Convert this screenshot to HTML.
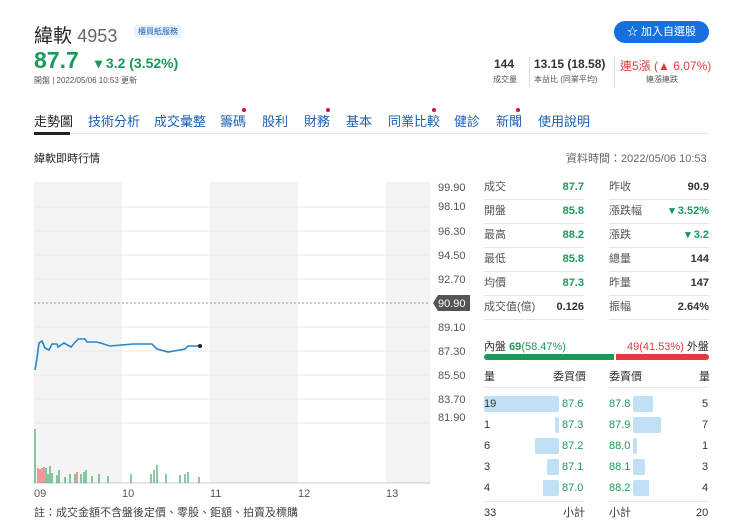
<!DOCTYPE html>
<html><head><meta charset="utf-8"><style>
*{margin:0;padding:0;box-sizing:border-box}
body{width:729px;height:531px;background:#fff;font-family:"Liberation Sans","Noto Sans CJK TC",sans-serif;color:#333;position:relative;overflow:hidden}
.a{position:absolute;white-space:nowrap}
.g{color:#1a9a5a}.r{color:#e03c3c}
.nav span{position:absolute;top:111px;font-size:13px;color:#1a5fb4}
.dot{position:absolute;width:4px;height:4px;border-radius:2px;background:#c0182e}
.rl{position:absolute;font-size:11px;color:#555;line-height:14px}
.rv{position:absolute;font-size:11px;font-weight:bold;text-align:right;width:60px;line-height:14px}
.hl{position:absolute;height:1px;background:#e6e6e6;width:100px}
.bb{position:absolute;height:16px;background:#bfe0f5;border-radius:2px}
.ov{position:absolute;font-size:11px;line-height:16px}
</style></head><body>
<div class="a" style="left:34px;top:21px;font-size:19px;color:#222">緯軟 <span style="color:#666;font-size:18px">4953</span></div>
<div class="a" style="left:134px;top:25px;font-size:8px;color:#1a5fb4;background:#eaf3fb;padding:1px 4px;border-radius:3px">櫃買紙服務</div>
<div class="a g" style="left:34px;top:47px;font-size:23px;font-weight:bold">87.7</div>
<div class="a g" style="left:95px;top:55px;font-size:14px;font-weight:bold">▾ 3.2 (3.52%)</div>
<div class="a" style="left:34px;top:75px;font-size:8px;color:#555">開盤 | 2022/05/06 10:53 更新</div>
<div class="a" style="left:614px;top:21px;width:95px;height:22px;background:#1670e0;border-radius:11px;color:#fff;font-size:11px;line-height:22px;text-align:center">☆ 加入自選股</div>
<div class="a" style="left:494px;top:57px;font-size:12px;font-weight:bold">144</div>
<div class="a" style="left:493px;top:74px;font-size:8px;color:#555">成交量</div>
<div class="a" style="left:529px;top:57px;width:1px;height:30px;background:#ddd"></div>
<div class="a" style="left:534px;top:57px;font-size:12px;font-weight:bold">13.15 (18.58)</div>
<div class="a" style="left:534px;top:74px;font-size:8px;color:#555">本益比 (同業平均)</div>
<div class="a" style="left:614px;top:57px;width:1px;height:30px;background:#ddd"></div>
<div class="a r" style="left:620px;top:57px;font-size:12px">連5漲 (▲ 6.07%)</div>
<div class="a" style="left:646px;top:74px;font-size:8px;color:#555">連漲連跌</div>
<div class="nav">
<span style="left:34px;color:#222">走勢圖</span><span style="left:88px">技術分析</span><span style="left:154px">成交彙整</span><span style="left:220px">籌碼</span><span style="left:262px">股利</span><span style="left:304px">財務</span><span style="left:346px">基本</span><span style="left:388px">同業比較</span><span style="left:454px">健診</span><span style="left:496px">新聞</span><span style="left:538px">使用說明</span>
</div>
<div class="dot" style="left:242px;top:108px"></div><div class="dot" style="left:326px;top:108px"></div><div class="dot" style="left:432px;top:108px"></div><div class="dot" style="left:516px;top:108px"></div>
<div class="a" style="left:34px;top:133px;width:675px;height:1px;background:#e6e6e6"></div>
<div class="a" style="left:34px;top:132px;width:36px;height:3px;background:#222"></div>
<div class="a" style="left:34px;top:150px;font-size:11px;color:#222">緯軟即時行情</div>
<div class="a" style="left:566px;top:150px;font-size:11px;color:#666">資料時間：2022/05/06 10:53</div>

<svg class="a" style="left:0;top:0" width="470" height="531">
<rect x="34" y="182" width="88" height="301" fill="#f4f4f4"/><rect x="210" y="182" width="88" height="301" fill="#f4f4f4"/><rect x="386" y="182" width="44" height="301" fill="#f4f4f4"/>
<g stroke="#e8e8e8" stroke-width="1"><line x1="34" x2="430" y1="207" y2="207"/><line x1="34" x2="430" y1="231" y2="231"/><line x1="34" x2="430" y1="255" y2="255"/><line x1="34" x2="430" y1="279" y2="279"/><line x1="34" x2="430" y1="327" y2="327"/><line x1="34" x2="430" y1="351" y2="351"/><line x1="34" x2="430" y1="375" y2="375"/><line x1="34" x2="430" y1="399" y2="399"/><line x1="34" x2="430" y1="423" y2="423"/></g>
<line x1="34" x2="430" y1="483" y2="483" stroke="#ccc"/>
<line x1="34" x2="430" y1="303" y2="303" stroke="#999" stroke-dasharray="2,2"/>
<polyline fill="none" stroke="#2a86c8" stroke-width="1.6" points="35,370 37,358 39,343 42,341 45,348 49,350 52,344 57,344 58,347 64,343 71,347 78,339 85,339 87,342 97,342 110,346 133,344 152,344 157,349 168,352 185,349 188,346 200,346"/>
<circle cx="200" cy="346" r="2" fill="#222"/>
<g stroke-width="1.2">
<line x1="35" y1="483" x2="35" y2="429" stroke="#3aa66a"/>
<g stroke="#e06060"><line x1="38" y1="483" x2="38" y2="468"/><line x1="40" y1="483" x2="40" y2="469"/><line x1="42" y1="483" x2="42" y2="468"/><line x1="44" y1="483" x2="44" y2="467"/><line x1="77" y1="483" x2="77" y2="472"/></g>
<g stroke="#3aa66a"><line x1="46" y1="483" x2="46" y2="468"/><line x1="48" y1="483" x2="48" y2="474"/><line x1="50" y1="483" x2="50" y2="466"/><line x1="52" y1="483" x2="52" y2="473"/><line x1="57" y1="483" x2="57" y2="475"/><line x1="59" y1="483" x2="59" y2="470"/><line x1="65" y1="483" x2="65" y2="477"/><line x1="70" y1="483" x2="70" y2="474"/><line x1="75" y1="483" x2="75" y2="474"/><line x1="81" y1="483" x2="81" y2="474"/><line x1="84" y1="483" x2="84" y2="472"/><line x1="86" y1="483" x2="86" y2="470"/><line x1="92" y1="483" x2="92" y2="476"/><line x1="99" y1="483" x2="99" y2="474"/><line x1="108" y1="483" x2="108" y2="476"/><line x1="131" y1="483" x2="131" y2="474"/><line x1="151" y1="483" x2="151" y2="474"/><line x1="154" y1="483" x2="154" y2="470"/><line x1="157" y1="483" x2="157" y2="465"/><line x1="166" y1="483" x2="166" y2="474"/><line x1="180" y1="483" x2="180" y2="475"/><line x1="185" y1="483" x2="185" y2="474"/><line x1="188" y1="483" x2="188" y2="472"/><line x1="199" y1="483" x2="199" y2="477"/></g></g>
<g font-size="11" fill="#555" font-family="Liberation Sans,sans-serif">
<text x="438" y="191">99.90</text><text x="438" y="210">98.10</text><text x="438" y="235">96.30</text><text x="438" y="259">94.50</text><text x="438" y="283">92.70</text><text x="438" y="331">89.10</text><text x="438" y="355">87.30</text><text x="438" y="379">85.50</text><text x="438" y="403">83.70</text><text x="438" y="421">81.90</text>
<text x="34" y="497">09</text><text x="122" y="497">10</text><text x="210" y="497">11</text><text x="298" y="497">12</text><text x="386" y="497">13</text></g>
<path d="M433 303 L438 295 H470 V311 H438 Z" fill="#555"/>
<text x="438" y="307" font-size="11" fill="#fff" font-family="Liberation Sans,sans-serif">90.90</text>
</svg>
<div class="a" style="left:34px;top:504px;font-size:11px;color:#444">註：成交金額不含盤後定價、零股、鉅額、拍賣及標購</div>

<div class="rl" style="left:484px;top:180px">成交</div><div class="rv g" style="left:524px;top:180px">87.7</div>
<div class="rl" style="left:609px;top:180px">昨收</div><div class="rv" style="left:649px;top:180px">90.9</div>
<div class="rl" style="left:484px;top:204px">開盤</div><div class="rv g" style="left:524px;top:204px">85.8</div>
<div class="rl" style="left:609px;top:204px">漲跌幅</div><div class="rv g" style="left:649px;top:204px">▾ 3.52%</div>
<div class="rl" style="left:484px;top:228px">最高</div><div class="rv g" style="left:524px;top:228px">88.2</div>
<div class="rl" style="left:609px;top:228px">漲跌</div><div class="rv g" style="left:649px;top:228px">▾ 3.2</div>
<div class="rl" style="left:484px;top:252px">最低</div><div class="rv g" style="left:524px;top:252px">85.8</div>
<div class="rl" style="left:609px;top:252px">總量</div><div class="rv" style="left:649px;top:252px">144</div>
<div class="rl" style="left:484px;top:276px">均價</div><div class="rv g" style="left:524px;top:276px">87.3</div>
<div class="rl" style="left:609px;top:276px">昨量</div><div class="rv" style="left:649px;top:276px">147</div>
<div class="rl" style="left:484px;top:300px">成交值(億)</div><div class="rv" style="left:524px;top:300px">0.126</div>
<div class="rl" style="left:609px;top:300px">振幅</div><div class="rv" style="left:649px;top:300px">2.64%</div>
<div class="hl" style="left:484px;top:199px"></div><div class="hl" style="left:609px;top:199px"></div>
<div class="hl" style="left:484px;top:223px"></div><div class="hl" style="left:609px;top:223px"></div>
<div class="hl" style="left:484px;top:247px"></div><div class="hl" style="left:609px;top:247px"></div>
<div class="hl" style="left:484px;top:271px"></div><div class="hl" style="left:609px;top:271px"></div>
<div class="hl" style="left:484px;top:295px"></div><div class="hl" style="left:609px;top:295px"></div>
<div class="hl" style="left:484px;top:319px"></div><div class="hl" style="left:609px;top:319px"></div>
<div class="a" style="left:484px;top:338px;font-size:11px">內盤 <b class="g">69</b><span class="g">(58.47%)</span></div>
<div class="a" style="left:627px;top:338px;font-size:11px"><span class="r">49(41.53%)</span> 外盤</div>
<div class="a" style="left:484px;top:354px;width:130px;height:6px;background:#1a9a5a;border-radius:3px 0 0 3px"></div>
<div class="a" style="left:616px;top:354px;width:93px;height:6px;background:#e03c3c;border-radius:0 3px 3px 0"></div>
<div class="rl" style="left:484px;top:370px;color:#333">量</div><div class="rl" style="left:553px;top:370px;color:#333">委買價</div>
<div class="rl" style="left:609px;top:370px;color:#333">委賣價</div><div class="rl" style="left:699px;top:370px;color:#333">量</div>
<div class="hl" style="left:484px;top:387px"></div><div class="hl" style="left:609px;top:387px"></div>
<div class="bb" style="left:484px;top:396px;width:75px"></div>
<div class="bb" style="left:555px;top:417px;width:4px"></div>
<div class="bb" style="left:535px;top:438px;width:24px"></div>
<div class="bb" style="left:547px;top:459px;width:12px"></div>
<div class="bb" style="left:543px;top:480px;width:16px"></div>
<div class="bb" style="left:633px;top:396px;width:20px"></div>
<div class="bb" style="left:633px;top:417px;width:28px"></div>
<div class="bb" style="left:633px;top:438px;width:4px"></div>
<div class="bb" style="left:633px;top:459px;width:12px"></div>
<div class="bb" style="left:633px;top:480px;width:16px"></div>
<div class="ov" style="left:484px;top:396px">19</div><div class="ov g" style="left:562px;top:396px">87.6</div><div class="ov g" style="left:609px;top:396px">87.8</div><div class="ov" style="left:702px;top:396px">5</div>
<div class="ov" style="left:484px;top:417px">1</div><div class="ov g" style="left:562px;top:417px">87.3</div><div class="ov g" style="left:609px;top:417px">87.9</div><div class="ov" style="left:702px;top:417px">7</div>
<div class="ov" style="left:484px;top:438px">6</div><div class="ov g" style="left:562px;top:438px">87.2</div><div class="ov g" style="left:609px;top:438px">88.0</div><div class="ov" style="left:702px;top:438px">1</div>
<div class="ov" style="left:484px;top:459px">3</div><div class="ov g" style="left:562px;top:459px">87.1</div><div class="ov g" style="left:609px;top:459px">88.1</div><div class="ov" style="left:702px;top:459px">3</div>
<div class="ov" style="left:484px;top:480px">4</div><div class="ov g" style="left:562px;top:480px">87.0</div><div class="ov g" style="left:609px;top:480px">88.2</div><div class="ov" style="left:702px;top:480px">4</div>
<div class="hl" style="left:484px;top:501px"></div><div class="hl" style="left:609px;top:501px"></div>
<div class="ov" style="left:484px;top:505px">33</div><div class="ov" style="left:563px;top:505px">小計</div><div class="ov" style="left:609px;top:505px">小計</div><div class="ov" style="left:696px;top:505px">20</div>
</body></html>
